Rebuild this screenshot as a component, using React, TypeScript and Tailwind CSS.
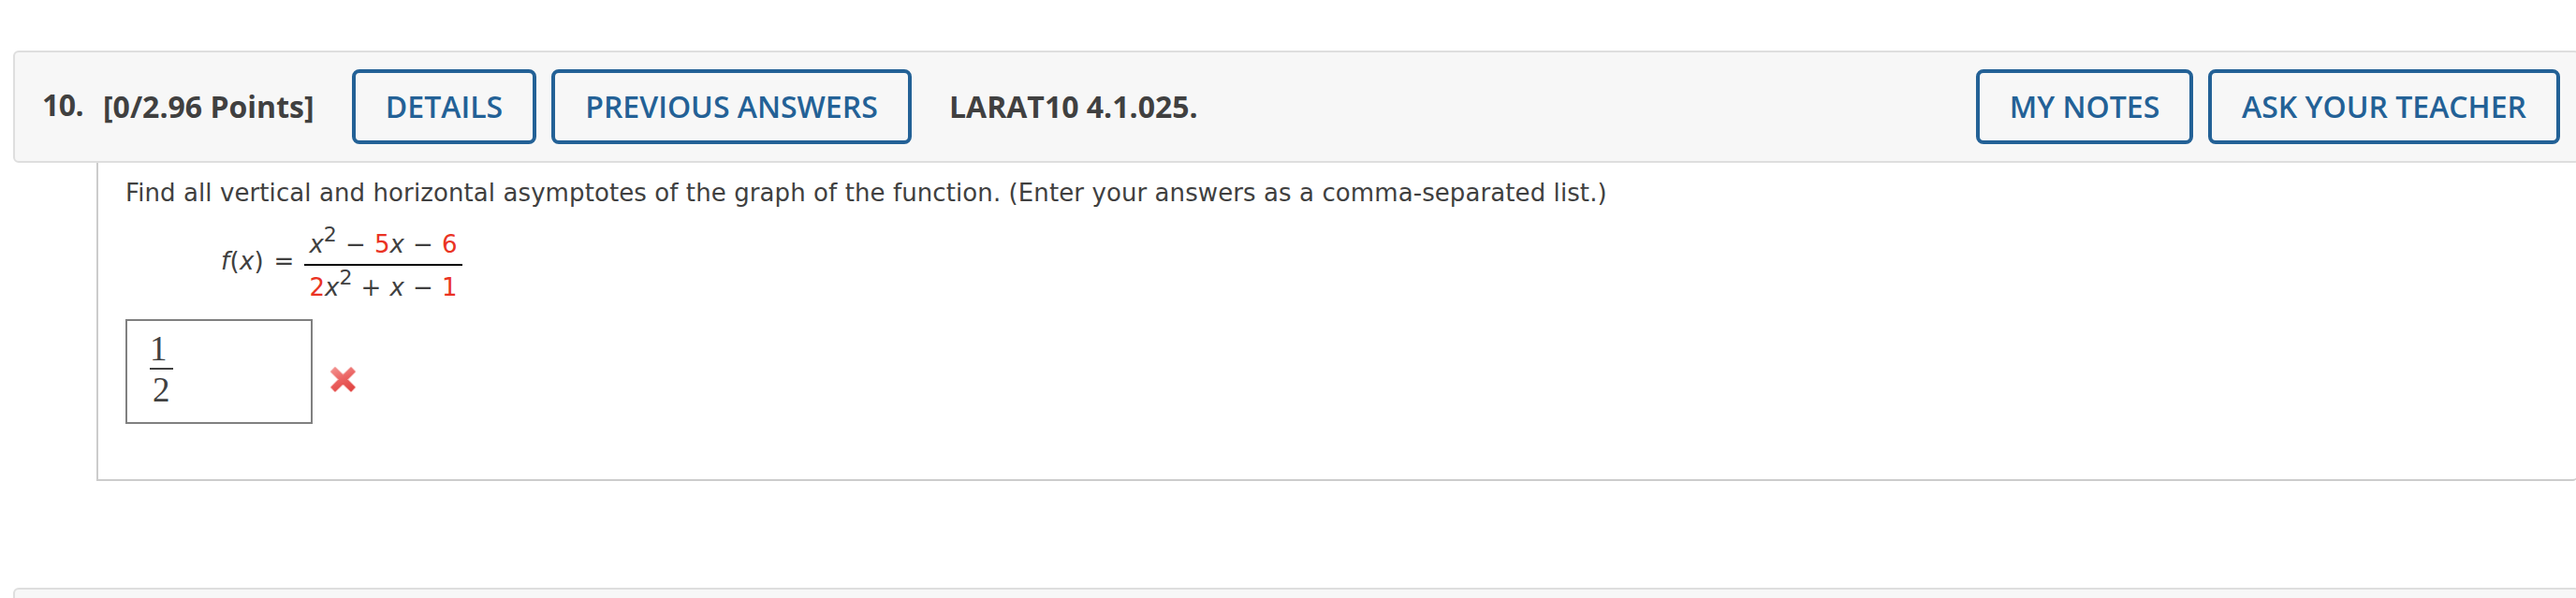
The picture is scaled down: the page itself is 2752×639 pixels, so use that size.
import React from "react";
import clsx from "clsx";

const HeaderButton = ({
	label,
	className,
}: {
	label: string;
	className?: string;
}) => (
	<button
		className={clsx(
			"h-20 shrink-0 rounded-[8px] border-4 border-[#236196] text-[32px] leading-[72px] font-semibold whitespace-nowrap text-[#236196]",
			className
		)}
	>
		{label}
	</button>
);

const Red = ({ children }: { children: React.ReactNode }) => (
	<span className="text-[#ea3323]">{children}</span>
);

const Square = () => (
	<sup className="top-[-12px] text-[22px] leading-none tracking-normal">
		2
	</sup>
);

const WrongMark = () => (
	<svg className="mt-[50px] ml-[18px] size-[29px]" viewBox="0 0 29 29">
		<defs>
			<linearGradient
				id="wrong"
				gradientUnits="userSpaceOnUse"
				x1="8"
				y1="1"
				x2="20"
				y2="28"
			>
				<stop offset="0" stopColor="#f28e8c" />
				<stop offset="0.5" stopColor="#ea605f" />
				<stop offset="1" stopColor="#e04340" />
			</linearGradient>
		</defs>
		<g fill="none" strokeLinejoin="round">
			<path
				d="M6 2 14.5 10.2 23 2 27 6.2 18.8 14.5 27 22.8 23 27 14.5 18.8 6 27 2 22.8 10.2 14.5 2 6.2Z"
				stroke="#f6b5b3"
				strokeWidth="2.4"
			/>
			<path
				d="M6 2.6 14.5 10.8 23 2.6 26.4 6.2 18.2 14.5 26.4 22.8 23 26.4 14.5 18.2 6 26.4 2.6 22.8 10.8 14.5 2.6 6.2Z"
				fill="url(#wrong)"
				stroke="url(#wrong)"
				strokeWidth="1.6"
			/>
		</g>
	</svg>
);

const QuestionHeader = () => (
	<header className="ml-[14px] flex h-[120px] w-[2742px] items-center rounded-[6px] border-2 border-[#dedede] bg-[#f7f7f7] pl-[29px] font-['Open_Sans',sans-serif] text-[32px] leading-[44px] font-bold whitespace-nowrap text-[#404040]">
		<span className="mb-1 w-[65px] tracking-[-0.5px]">10.</span>
		<span className="w-[266px]">[0/2.96 Points]</span>
		<HeaderButton label="DETAILS" className="w-[197px]" />
		<HeaderButton label="PREVIOUS ANSWERS" className="ml-4 w-[385px]" />
		<span className="ml-10">LARAT10 4.1.025.</span>
		<HeaderButton label="MY NOTES" className="ml-auto w-[232px]" />
		<HeaderButton
			label="ASK YOUR TEACHER"
			className="mr-[19px] ml-4 w-[376px]"
		/>
	</header>
);

const Formula = () => (
	<div className="mt-[10px] ml-[102px] flex h-[93px] text-[26px] leading-[46px]">
		<span className="mt-5 w-[89px] tracking-[0.3px] whitespace-nowrap [word-spacing:2px]">
			<i>f</i>(<i>x</i>) =
		</span>
		<div className="flex w-[169px] flex-col items-center whitespace-nowrap">
			<div className="h-[46px] leading-[50px] [word-spacing:0.9px]">
				<i>x</i>
				<Square /> − <Red>5</Red>
				<i>x</i> − <Red>6</Red>
			</div>
			<div className="h-[2px] w-full bg-black" />
			<div className="h-[45px] [word-spacing:0.9px]">
				<Red>2</Red>
				<i>x</i>
				<Square /> + <i>x</i> − <Red>1</Red>
			</div>
		</div>
	</div>
);

const Answer = () => (
	<div className="mt-3 flex">
		<div className="h-[112px] w-[200px] border-2 border-[#808080] pt-2 pl-6 font-['Liberation_Serif',serif] text-[37px] leading-[44px]">
			<div className="w-[25px]">
				<div className="h-[42px]">1</div>
				<div className="h-[2px] bg-[#404040]" />
				<div className="pl-[3px]">2</div>
			</div>
		</div>
		<WrongMark />
	</div>
);

export default function App() {
	return (
		<main className="h-[639px] w-full overflow-hidden bg-white pt-[54px] text-[#404040]">
			<QuestionHeader />
			<section className="ml-[103px] h-[340px] w-[2651px] rounded-br-[6px] border-b-2 border-l-2 border-[#ccc] pt-3 pl-[29px] font-['DejaVu_Sans',sans-serif]">
				<p className="text-[26px] leading-10 tracking-[0.09px] whitespace-nowrap">
					Find all vertical and horizontal asymptotes of the graph of
					the function. (Enter your answers as a comma-separated
					list.)
				</p>
				<Formula />
				<Answer />
			</section>
			<div className="mt-[114px] ml-[14px] h-[120px] w-[2742px] rounded-[6px] border-2 border-[#dedede] bg-[#f7f7f7]" />
		</main>
	);
}
